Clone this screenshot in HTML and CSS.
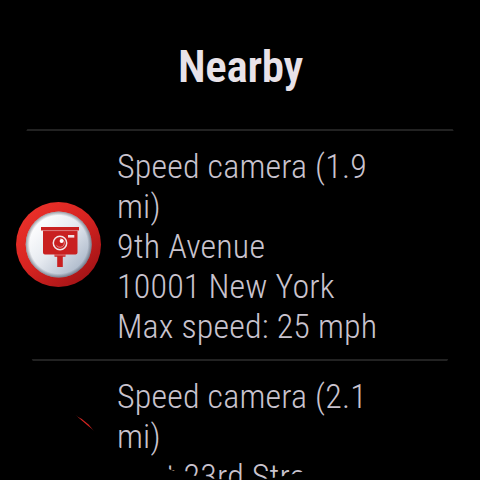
FILE: index.html
```
<!DOCTYPE html>
<html lang="en">
<head>
<meta charset="utf-8">
<title>Nearby</title>
<link rel="stylesheet" href="styles.css">
</head>
<body>
<main class="watch">
  <h1 class="title">Nearby</h1>
  <section class="item">
    <svg class="icon" viewBox="0 0 86 86">
      <defs>
        <linearGradient id="ring" x1="0.15" y1="0.1" x2="0.85" y2="0.9">
          <stop offset="0" stop-color="#ea3029"/>
          <stop offset="0.5" stop-color="#d42320"/>
          <stop offset="1" stop-color="#a31316"/>
        </linearGradient>
        <linearGradient id="face" x1="0.15" y1="0.15" x2="0.9" y2="0.85">
          <stop offset="0" stop-color="#ffffff"/>
          <stop offset="0.45" stop-color="#e6eaf0"/>
          <stop offset="1" stop-color="#a9b6c8"/>
        </linearGradient>
        <radialGradient id="shade">
          <stop offset="0.88" stop-color="#303848" stop-opacity="0"/>
          <stop offset="1" stop-color="#303848" stop-opacity="0.5"/>
        </radialGradient>
        <g id="badge">
          <circle cx="42.5" cy="42.5" r="42.5" fill="url(#ring)"/>
          <circle cx="42.7" cy="42.5" r="33" fill="url(#face)"/>
          <circle cx="42.7" cy="42.5" r="33" fill="url(#shade)"/>
          <path d="M25 25H63V28.5H61.5V50.5Q61.5 52.5 59.5 52.5H49.5V54.7H46.8V65H41.2V54.7H38.5V52.5H29Q27 52.5 27 50.5V28.5H25Z" fill="#c92020"/>
          <path d="M25.5 28.6H62.5M38.5 53H49.5" stroke="#e6a5a7" stroke-width="0.7"/>
          <circle cx="44" cy="41" r="6.7" fill="none" stroke="#f2e8ea" stroke-width="1.5"/>
          <path d="M44.2 36.7A4.3 4.3 0 1 1 40.5 43.4" fill="none" stroke="#f2c9cb" stroke-width="0.6"/>
          <circle cx="45.6" cy="39" r="2" fill="#fff"/>
          <rect x="52" y="33" width="6.3" height="2.6" fill="#f0dfe1"/>
        </g>
      </defs>
      <use href="#badge"/>
    </svg>
    <p class="details">Speed camera (1.9<br>mi)<br>9th Avenue<br>10001 New York<br>Max speed: 25 mph</p>
  </section>
  <section class="item">
    <svg class="icon" viewBox="0 0 86 86"><use href="#badge"/></svg>
    <p class="details">Speed camera (2.1<br>mi)<br>East 23rd Street<br>10010 New York</p>
  </section>
</main>
</body>
</html>
```
FILE: styles.css
```
html, body {
  margin: 0;
  background: #000;
}
body {
  width: 480px;
  height: 480px;
  overflow: hidden;
}
.watch {
  width: 480px;
  height: 480px;
  overflow: hidden;
  background: #000;
  clip-path: circle(240px at 240px 240px);
  font-family: "Roboto Condensed", Roboto, sans-serif;
  font-stretch: 75%;
  color: #c9c3ce;
}
.title {
  margin: 0;
  height: 129px;
  display: flex;
  align-items: center;
  justify-content: center;
  box-sizing: border-box;
  padding: 4px 0 0 1px;
  font-size: 45px;
  line-height: 52px;
  font-weight: 600;
  letter-spacing: -0.3px;
  color: #e8e2e8;
}
.item {
  display: flex;
  align-items: center;
  border-top: 2px solid #222;
  padding: 15px 0 13px 16px;
}
.icon {
  flex: none;
  width: 86px;
  height: 86px;
  margin: -3px 15px 0 0;
}
.details {
  margin: 0;
  font-size: 34px;
  line-height: 40px;
  font-weight: 300;
  letter-spacing: 0.18px;
  white-space: nowrap;
}
```
